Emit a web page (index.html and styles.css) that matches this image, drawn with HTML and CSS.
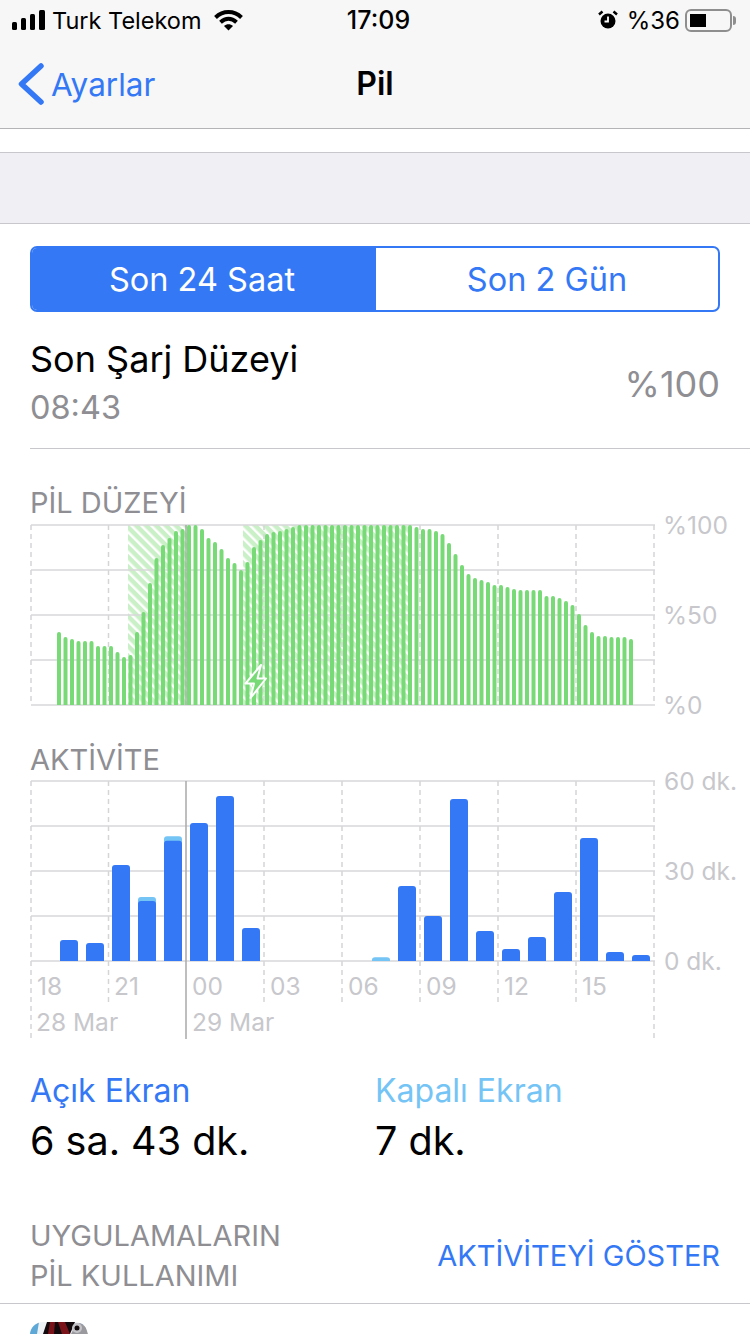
FILE: index.html
```html
<!DOCTYPE html>
<html lang="tr">
<head>
<meta charset="utf-8">
<title>Pil</title>
<link rel="stylesheet" href="styles.css">
</head>
<body>
<div class="phone">
  <header class="top">
    <div class="status">
      <div class="status-left">
        <svg class="signal" viewBox="0 0 33 20" width="33" height="20"><rect x="0" y="12" width="5" height="8" rx="1.5"/><rect x="9" y="8" width="5" height="12" rx="1.5"/><rect x="18" y="4" width="5" height="16" rx="1.5"/><rect x="27" y="0" width="6" height="20" rx="1.5"/></svg>
        <span class="carrier">Turk Telekom</span>
        <svg class="wifi" viewBox="0 0 29 21" width="29" height="21"><path d="M1.5 7.5C9 .3 20 .3 27.500 7.500" /><path d="M6.500 12.200C11.500 7.700 17.500 7.700 22.500 12.200"/><path class="wifi-dot" d="M14.500 20.500 10 16c2.500-2.300 6.500-2.300 9 0z"/></svg>
      </div>
      <span class="time">17:09</span>
      <div class="status-right">
        <svg class="alarm" viewBox="0 0 20 20" width="20" height="20"><circle cx="10" cy="11" r="7.500"/><path class="alarm-hand" d="M10 6.500V11.500H6.500"/><path class="alarm-bell" d="M1 4.500 4.500 1.500M19 4.500 15.500 1.500"/></svg>
        <span class="percent">%36</span>
        <div class="battery"><div class="battery-level"></div></div>
        <div class="battery-tip"></div>
      </div>
    </div>
    <nav class="nav">
      <a class="back">
        <svg class="chevron" viewBox="0 0 26 42" width="26" height="42"><path d="M23 3 3.500 21 23 39"/></svg>
        <span>Ayarlar</span>
      </a>
      <h1 class="title">Pil</h1>
    </nav>
  </header>

  <div class="spacer-white"></div>
  <div class="spacer-gray"></div>

  <main class="content">
    <div class="segment">
      <div class="seg seg-on">Son 24 Saat</div>
      <div class="seg">Son 2 Gün</div>
    </div>

    <div class="charge-row">
      <div class="charge-text">
        <div class="charge-title">Son Şarj Düzeyi</div>
        <div class="charge-time">08:43</div>
      </div>
      <div class="charge-value">%100</div>
    </div>

    <h2 class="chart-head chart-head-first">PİL DÜZEYİ</h2>
    <svg class="chart chart-battery" viewBox="0 520 750 196" width="750" height="196">
      <defs>
        <pattern id="hatch" width="7" height="7" patternUnits="userSpaceOnUse" patternTransform="rotate(-45)">
          <rect class="hatch-fill" width="7" height="7"/>
          <rect class="hatch-gap" x="0" width="2.500" height="7"/>
        </pattern>
        <clipPath id="plot"><rect x="31" y="520" width="624" height="185"/></clipPath>
      </defs>
      <rect x="128" y="525" width="59" height="180" fill="url(#hatch)"/>
      <rect x="243" y="525" width="165" height="180" fill="url(#hatch)"/>
      <path class="dash" d="M31 525V705M108.500 525V705M264 525V705M342 525V705M420 525V705M498 525V705M576 525V705M654 525V705"/>
      <path class="grid" d="M31 525H655M31 570H655M31 615H655M31 660H655M31 705H655"/>
      <path class="midnight" d="M186 525V705"/>
      <path class="level-bars" clip-path="url(#plot)" d="M59 707V634M65.500 707V639M72 707V641M78.500 707V643M85 707V643M91.500 707V643M98 707V648M104.500 707V648M111 707V648M117.500 707V654M124 707V659M130.500 707V657M137 707V634M143.500 707V614M150 707V585M156.500 707V560M163 707V547M169.500 707V540M176 707V533M182.500 707V531M189 707V527M195.500 707V527M202 707V531M208.500 707V540M215 707V544M221.500 707V551M228 707V560M234.500 707V565M241 707V572M247.500 707V564M254 707V549M260.500 707V542M267 707V536M273.500 707V534M280 707V533M286.500 707V531M293 707V529M299.500 707V527M306 707V527M312.500 707V527M319 707V527M325.500 707V527M332 707V527M338.500 707V527M345 707V527M351.500 707V527M358 707V527M364.500 707V527M371 707V527M377.500 707V527M384 707V527M390.500 707V527M397 707V527M403.500 707V527M410 707V527M416.500 707V529M423 707V531M429.500 707V531M436 707V533M442.500 707V536M449 707V545M455.500 707V556M462 707V567M468.500 707V576M475 707V580M481.500 707V582M488 707V584M494.500 707V587M501 707V587M507.500 707V589M514 707V591M520.500 707V592M527 707V592M533.500 707V592M540 707V592M546.500 707V598M553 707V598M559.500 707V600M566 707V603M572.500 707V607M579 707V616M585.500 707V627M592 707V634M598.500 707V638M605 707V638M611.500 707V639M618 707V639M624.500 707V639M631 707V641"/>
      <path class="bolt" d="M261 665 245.500 683.500H254L250.500 698 266 678.500H257.500z"/>
      <text class="axis" x="663" y="534">%100</text>
      <text class="axis" x="663" y="624">%50</text>
      <text class="axis" x="663" y="714">%0</text>
    </svg>

    <h2 class="chart-head chart-head-second">AKTİVİTE</h2>
    <svg class="chart chart-activity" viewBox="0 776 750 268" width="750" height="268">
      <path class="dash" d="M31 781V1039M108.500 781V1005M264 781V1005M342 781V1005M420 781V1005M498 781V1005M576 781V1005M654 781V1039"/>
      <path class="grid" d="M31 781H655M31 826H655M31 871H655M31 916H655M31 961H655"/>
      <path class="midnight" d="M186 781V1039"/>
      <path class="bar-off" d="M138 961V900q0-3 3-3h12q3 0 3 3v61zM164 961V839.300q0-3 3-3h12q3 0 3 3V961zM372 961V960q0-2.700 3-2.700h12q3 0 3 2.700v1z"/>
      <path class="bar-on" d="M60 961V943q0-3 3-3h12q3 0 3 3v18zM86 961V946q0-3 3-3h12q3 0 3 3v15zM112 961V868q0-3 3-3h12q3 0 3 3v93zM138 961V904q0-3 3-3h12q3 0 3 3v57zM164 961V843.700q0-3 3-3h12q3 0 3 3V961zM190 961V826q0-3 3-3h12q3 0 3 3V961zM216 961V799q0-3 3-3h12q3 0 3 3V961zM242 961V931q0-3 3-3h12q3 0 3 3v30zM398 961V889q0-3 3-3h12q3 0 3 3v72zM424 961V919q0-3 3-3h12q3 0 3 3v42zM450 961V802q0-3 3-3h12q3 0 3 3V961zM476 961V934q0-3 3-3h12q3 0 3 3v27zM502 961V952q0-3 3-3h12q3 0 3 3v9zM528 961V940q0-3 3-3h12q3 0 3 3v21zM554 961V895q0-3 3-3h12q3 0 3 3v66zM580 961V841q0-3 3-3h12q3 0 3 3V961zM606 961V955q0-3 3-3h12q3 0 3 3v6zM632 961V958q0-3 3-3h12q3 0 3 3v3z"/>
      <text class="axis" x="664" y="790">60 dk.</text>
      <text class="axis" x="664" y="880">30 dk.</text>
      <text class="axis" x="664" y="970">0 dk.</text>
      <text class="axis" x="37" y="995">18</text>
      <text class="axis" x="114" y="995">21</text>
      <text class="axis" x="192" y="995">00</text>
      <text class="axis" x="270" y="995">03</text>
      <text class="axis" x="348" y="995">06</text>
      <text class="axis" x="426" y="995">09</text>
      <text class="axis" x="504" y="995">12</text>
      <text class="axis" x="582" y="995">15</text>
      <text class="axis" x="36" y="1031">28 Mar</text>
      <text class="axis" x="192" y="1031">29 Mar</text>
    </svg>

    <div class="usage">
      <div class="usage-col">
        <div class="usage-label usage-on">Açık Ekran</div>
        <div class="usage-value">6 sa. 43 dk.</div>
      </div>
      <div class="usage-col">
        <div class="usage-label usage-off">Kapalı Ekran</div>
        <div class="usage-value">7 dk.</div>
      </div>
    </div>

    <div class="apps-head">
      <div class="apps-title">UYGULAMALARIN<br>PİL KULLANIMI</div>
      <a class="apps-link">AKTİVİTEYİ GÖSTER</a>
    </div>
    <div class="app-row">
      <svg class="app-icon" viewBox="0 0 58 12" width="58" height="12">
        <defs><clipPath id="icon-shape"><rect width="58" height="40" rx="13"/></clipPath></defs>
        <g clip-path="url(#icon-shape)">
          <rect class="app-bg" width="58" height="12"/>
          <path class="app-sky" d="M0 12V0H9L7 12z"/>
          <path class="app-sky" d="M50 0H58V3H52z"/>
          <path class="app-dark" d="M13 12 17 0H45L40 12z"/>
          <path class="app-red" d="M18 12 20 0H25L24 12zM28 0H35L40 12H32z"/>
          <path class="app-metal" d="M41 12 46 2 54 0 58 12z"/>
          <circle class="app-ring" cx="47" cy="6" r="5"/>
          <circle class="app-dark" cx="47" cy="6" r="2.500"/>
        </g>
      </svg>
    </div>
  </main>
</div>
</body>
</html>
```
FILE: styles.css
```css
* { box-sizing: border-box; margin: 0; padding: 0; }
html, body { background: #fff; }
body { font-family: Inter, "Liberation Sans", sans-serif; color: #000; }
.phone { width: 750px; height: 1334px; overflow: hidden; background: #fff; }

.top { height: 129px; background: #f7f7f8; border-bottom: 1px solid #b4b4b6; }
.status { height: 40px; display: flex; align-items: center; justify-content: space-between; padding: 0 14px 0 12px; position: relative; }
.status-left { display: flex; align-items: center; }
.signal { fill: #000; }
.carrier { font-size: 23.500px; margin-left: 7px; }
.wifi { margin-left: 12px; fill: none; stroke: #000; stroke-width: 4; }
.wifi-dot { fill: #000; stroke: none; }
.time { position: absolute; left: 0; right: 0; text-align: center; font-size: 25px; font-weight: 500; pointer-events: none; padding-left: 7px; }
.status-right { display: flex; align-items: center; }
.alarm { fill: #000; }
.alarm-hand { fill: none; stroke: #fff; stroke-width: 1.800; }
.alarm-bell { fill: none; stroke: #000; stroke-width: 2.500; }
.percent { font-size: 24px; margin-left: 9px; }
.battery { width: 47px; height: 23px; margin-left: 5px; border: 2px solid #8e8e8e; border-radius: 6px; padding: 3px; }
.battery-level { width: 16px; height: 13px; background: #000; }
.battery-tip { width: 3px; height: 9px; background: #8e8e8e; border-radius: 0 3px 3px 0; margin-left: 1px; }

.nav { height: 88px; position: relative; display: flex; align-items: center; justify-content: center; padding-bottom: 2px; }
.back { position: absolute; left: 18px; top: 0; height: 88px; display: flex; align-items: center; gap: 7px; color: #3478f6; font-size: 31.500px; }
.chevron { fill: none; stroke: #3478f6; stroke-width: 5.500; stroke-linecap: round; stroke-linejoin: round; }
.title { font-size: 32px; font-weight: 600; }

.spacer-white { height: 24px; background: #fff; border-bottom: 1px solid #c8c7cc; }
.spacer-gray { height: 71px; background: #efeff4; border-bottom: 1px solid #c8c7cc; }

.content { padding-top: 22px; }
.segment { display: flex; height: 66px; margin: 0 30px; border: 2px solid #3478f6; border-radius: 7px; overflow: hidden; }
.seg { flex: 1; display: flex; align-items: center; justify-content: center; font-size: 32.500px; color: #3478f6; }
.seg-on { background: #3478f6; color: #fff; flex: 0 0 344px; padding-right: 4px; }

.charge-row { display: flex; align-items: center; justify-content: space-between; margin-left: 30px; padding: 4px 30px 0 0; height: 137px; border-bottom: 1px solid #c8c7cc; }
.charge-text { display: flex; flex-direction: column; gap: 8px; }
.charge-title { font-size: 36px; line-height: 44px; }
.charge-time { font-size: 32.500px; line-height: 38px; color: #8e8e93; }
.charge-value { font-size: 36px; color: #8e8e93; padding-top: 4px; }

.chart-head { font-size: 29px; line-height: 34px; font-weight: 400; color: #8e8e93; padding-left: 30px; }
.chart-head-first { margin-top: 37px; height: 34px; }
.chart-head-second { margin-top: 27px; height: 33px; }
.chart { display: block; overflow: visible; }
.grid { fill: none; stroke: #d8d8da; stroke-width: 1.500; }
.dash { fill: none; stroke: #d5d5d8; stroke-width: 1.500; stroke-dasharray: 5 4; }
.midnight { fill: none; stroke: #a8a8aa; stroke-width: 1.500; }
.hatch-fill { fill: #c9f0c6; }
.hatch-gap { fill: #fff; }
.level-bars { fill: none; stroke: #78d977; stroke-width: 4; stroke-linecap: round; }
.bolt { fill: #78d977; stroke: #fff; stroke-width: 2; stroke-linejoin: round; }
.axis { font-family: Inter, "Liberation Sans", sans-serif; font-size: 24.500px; fill: #c7c7cc; }
.bar-on { fill: #3478f6; }
.bar-off { fill: #74c4f6; }

.usage { display: flex; padding: 25px 0 0 30px; }
.usage-col { width: 345px; }
.usage-label { font-size: 32px; line-height: 44px; }
.usage-on { color: #3478f6; }
.usage-off { color: #74c4f6; }
.usage-value { font-size: 39.500px; line-height: 56px; }

.apps-head { display: flex; align-items: center; justify-content: space-between; margin-top: 47px; padding: 0 30px 8px 30px; height: 88px; border-bottom: 1px solid #c8c7cc; }
.apps-title { font-size: 29px; line-height: 40px; color: #8e8e93; }
.apps-link { font-size: 29px; color: #3478f6; }

.app-row { padding: 18px 0 0 30px; }
.app-icon { display: block; }
.app-bg { fill: #eef2f4; }
.app-sky { fill: #5ea8d8; }
.app-dark { fill: #120a0c; }
.app-red { fill: #7a141a; }
.app-metal { fill: #9a9a9e; }
.app-ring { fill: #c4c4c8; }
```
